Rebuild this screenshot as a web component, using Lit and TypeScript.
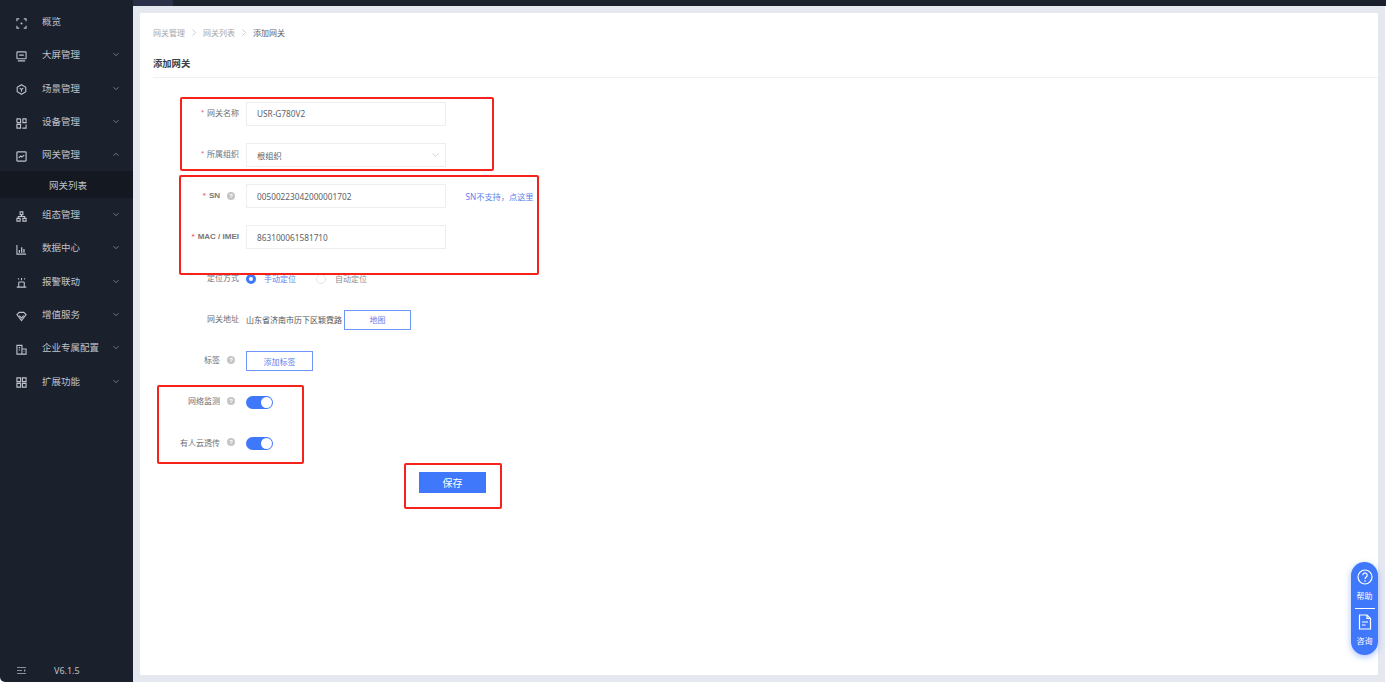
import { LitElement, html, css, svg } from "lit";
import { customElement } from "lit/decorators.js";

const ic = (body: unknown) => html`<svg class="ic" viewBox="0 0 12 12" fill="none" stroke="currentColor" stroke-width="1.2">${body}</svg>`;
const icons: Record<string, unknown> = {
  overview: svg`<path d="M1 3.500V1h2.500M8.500 1H11v2.500M11 8.500V11H8.500M3.500 11H1V8.500"/><circle cx="6" cy="6" r="1.100" fill="currentColor" stroke="none"/>`,
  screen: svg`<rect x="1" y="1" width="10" height="7.500" rx=".6"/><path d="M3.500 4.500h5M2 10.800h8" stroke-width="1.300"/>`,
  scene: svg`<path d="M6 .8l4.700 2.700v5L6 11.200 1.300 8.500v-5z"/><path d="M4 4.500L6 6l2-1.500M6 6v2.500"/>`,
  device: svg`<path d="M1 5V1h4M1 5h4V1M7.500 1H11v4H7.500zM1 7h4v4H1zM11 7v4H7"/>`,
  gateway: svg`<rect x="1" y="1" width="10" height="10" rx=".6" stroke-width="1.300"/><path d="M3 7.500l2-2 1.500 1L9 4.500"/>`,
  config: svg`<path d="M4.500 1h3v3h-3zM1 8h3.500v3H1zM7.500 8H11v3H7.500zM6 4v2M2.500 8V6h7v2"/>`,
  data: svg`<path d="M1 1v10h10"/><path d="M3.700 6.500v3M6.200 3.500v6M8.700 5.500v4" stroke-width="1.400"/>`,
  alarm: svg`<path d="M3 5.500v5.500M9 5.500v5.500M.8 11h10.400M3 5.500h6M6 1v2.500M2.200 1.500l1 1M9.800 1.500l-1 1"/>`,
  value: svg`<path d="M1 4l2.500-2.500h5L11 4l-5 6.500z"/><path d="M3.500 5L6 7.500 8.500 5"/>`,
  company: svg`<path d="M1 11V1.500h5.500V11zM6.500 5.500H11V11H1M3 4h1.500M3 6.500h1.500M8.500 8h.5"/>`,
  extend: svg`<path d="M1 1h4v4H1zM7 1h4v4H7zM1 7h4v4H1zM7 7h4v4H7z"/>`,
};

const menu = [
  ["overview", "概览", ""],
  ["screen", "大屏管理", "d"],
  ["scene", "场景管理", "d"],
  ["device", "设备管理", "d"],
  ["gateway", "网关管理", "u"],
  ["", "网关列表", ""],
  ["config", "组态管理", "d"],
  ["data", "数据中心", "d"],
  ["alarm", "报警联动", "d"],
  ["value", "增值服务", "d"],
  ["company", "企业专属配置", "d"],
  ["extend", "扩展功能", "d"],
];

@customElement("app-root")
export class AppRoot extends LitElement {
  static styles = css`
    :host {
      display: flex;
      width: 1386px;
      height: 682px;
      overflow: hidden;
      position: relative;
      background: #fff;
      font-family: "Noto Sans", "Noto Sans CJK SC", sans-serif;
      color: #555;
    }
    .side {
      width: 133px;
      flex: none;
      background: #1b202d;
      color: #bfc2ca;
      display: flex;
      flex-direction: column;
      font-size: 9.500px;
      padding-top: 5px;
      box-sizing: border-box;
      border-bottom-left-radius: 5px;
    }
    .item {
      height: 33.300px;
      display: flex;
      align-items: center;
      padding: 0 13.500px 0 16px;
    }
    .ic { width: 11px; height: 11px; flex: none; margin-top: 3px; }
    .item .name { margin-left: 15px; flex: 1; margin-top: -1px; }
    .chev { width: 8px; height: 5px; flex: none; }
    .sub {
      height: 26.500px;
      background: #141821;
      display: flex;
      align-items: center;
      padding-left: 49px;
    }
    .foot {
      margin-top: auto;
      height: 22px;
      display: flex;
      align-items: center;
      padding: 0 0 1px 17px;
      font-size: 9px;
    }
    .foot svg { width: 9px; height: 7px; margin-right: 28px; color: #8b8f99; }
    .main {
      flex: 1;
      display: flex;
      flex-direction: column;
      background: #e6e8f0;
      min-width: 0;
    }
    .top {
      height: 6px;
      flex: none;
      background: #1b202d;
      display: flex;
    }
    .tab { width: 40px; background: #2b3048; }
    .wrap {
      flex: 1;
      padding: 7px 7px 7px 7px;
      display: flex;
      min-height: 0;
      border-right: 1px solid #fff;
    }
    .card {
      flex: 1;
      background: #fff;
      padding: 0 0 0 13px;
      display: flex;
      flex-direction: column;
    }
    .crumb {
      height: 38px;
      display: flex;
      align-items: center;
      font-size: 8px;
      color: #a5a7ab;
    }
    .crumb svg { width: 4px; height: 7px; margin: 0 7px; color: #b5b7bb; }
    .crumb b { font-weight: 400; color: #606266; }
    .title {
      height: 27px;
      padding-bottom: 2px;
      display: flex;
      align-items: center;
      font-size: 9.300px;
      font-weight: 700;
      color: #3c3f45;
      border-bottom: 1px solid #eef0f3;
      margin-bottom: 23.500px;
      box-sizing: border-box;
    }
    .row {
      height: 41.250px;
      display: flex;
      align-items: flex-start;
      font-size: 8px;
    }
    .label {
      width: 86px;
      height: 24px;
      display: flex;
      align-items: center;
      justify-content: flex-end;
      color: #6e7075;
      flex: none;
      margin-top: -1.500px;
      white-space: nowrap;
    }
    .label i { font-style: normal; color: #ef6a6a; margin-right: 3px; font-family: "Liberation Sans", sans-serif; }
    .label.en { font-family: "Liberation Sans", sans-serif; font-weight: 700; color: #777; margin-top: -0.500px; }
    .q {
      width: 8px;
      height: 8px;
      border-radius: 50%;
      background: #c4c5c7;
      color: #fff;
      font: 700 6px/8px "Liberation Sans", sans-serif;
      text-align: center;
      margin-left: 7px;
      margin-right: 4px;
      flex: none;
    }
    .control { margin-left: 7px; display: flex; align-items: center; height: 24px; }
    .input {
      width: 200px;
      height: 24px;
      border: 1px solid #eceef2;
      box-sizing: border-box;
      display: flex;
      align-items: center;
      justify-content: space-between;
      padding: 0 6px 0 10px;
      font-size: 8.250px;
      color: #606266;
    }
    .input svg { width: 7px; height: 4px; color: #c4c6cc; }
    .link { color: #5b82ee; font-size: 8.200px; margin-left: 19.500px; white-space: nowrap; }
    .radio {
      width: 10px;
      height: 10px;
      border-radius: 50%;
      box-sizing: border-box;
      border: 3px solid #3f78fb;
      background: #fff;
      margin-right: 8px;
    }
    .radio.off { border: 1px solid #e4e6ea; margin-right: 9px; }
    .on { color: #5b82ee; margin-right: 20px; }
    .plain { white-space: nowrap; color: #555; }
    .plain.muted { color: #8a8c90; }
    .btn {
      height: 20px;
      border: 1px solid #6f97f8;
      box-sizing: border-box;
      display: flex;
      align-items: center;
      justify-content: center;
      color: #5b82ee;
    }
    .btn.map { width: 67px; margin-left: 2px; }
    .btn.tag { width: 67px; }
    .switch {
      width: 27px;
      height: 13px;
      border-radius: 7px;
      background: #3f78fb;
      display: flex;
      justify-content: flex-end;
      align-items: center;
      padding-right: 1px;
      box-sizing: border-box;
    }
    .switch span { width: 11px; height: 11px; border-radius: 50%; background: #fff; }
    .savebar { padding-left: 266px; margin-top: -1px; }
    .save {
      width: 67px;
      height: 21px;
      background: #3f78fb;
      color: #fff;
      font-size: 10px;
      display: flex;
      align-items: center;
      justify-content: center;
    }
    .mark {
      position: absolute;
      border: 2px solid #f5231c;
      border-radius: 2px;
      box-sizing: border-box;
    }
    .m1 { left: 180px; top: 97px; width: 314px; height: 74px; }
    .m2 { left: 179px; top: 175px; width: 360px; height: 100px; }
    .m3 { left: 157px; top: 385px; width: 147px; height: 79px; }
    .m4 { left: 404px; top: 463px; width: 98px; height: 46px; }
    .help {
      position: absolute;
      left: 1351px;
      top: 562px;
      width: 27px;
      height: 93px;
      border-radius: 14px;
      background: #3f78fb;
      box-shadow: 0 2px 6px rgba(63, 120, 251, 0.45);
      color: #fff;
      font-size: 8px;
      display: flex;
      flex-direction: column;
      align-items: center;
      padding-top: 7px;
      box-sizing: border-box;
    }
    .help svg { width: 16px; height: 16px; flex: none; }
    .help span { line-height: 12px; margin-top: 5px; }
    .help hr {
      width: 20px;
      height: 1px;
      background: #fff;
      border: 0;
      margin: 6px 0 5px;
      flex: none;
    }
  `;

  private chevron(dir: string) {
    return html`<svg class="chev" viewBox="0 0 8 5" fill="none" stroke="#8d919b" stroke-width=".8">
      ${dir === "d" ? svg`<path d="M1.500 1.200L4 3.700l2.500-2.500"/>` : svg`<path d="M1.500 3.700L4 1.200l2.500 2.500"/>`}
    </svg>`;
  }

  private q() {
    return html`<span class="q">?</span>`;
  }

  render() {
    return html`
      <aside class="side">
        ${menu.map(([icon, name, dir]) =>
          icon
            ? html`<div class="item">${ic(icons[icon])}<span class="name">${name}</span>${dir ? this.chevron(dir) : ""}</div>`
            : html`<div class="sub">${name}</div>`
        )}
        <div class="foot">
          <svg viewBox="0 0 9 7" fill="currentColor"><path d="M0 0h9v1H0zM0 3h5v1H0zM0 6h9v1H0zM7 2l2 1.500L7 5z"/></svg>
          <span>V6.1.5</span>
        </div>
      </aside>
      <div class="main">
        <div class="top"><div class="tab"></div></div>
        <div class="wrap">
          <div class="card">
            <div class="crumb">
              网关管理
              <svg viewBox="0 0 4 7" fill="none" stroke="currentColor" stroke-width=".7"><path d="M.5.5l3 3-3 3"/></svg>
              网关列表
              <svg viewBox="0 0 4 7" fill="none" stroke="currentColor" stroke-width=".7"><path d="M.5.5l3 3-3 3"/></svg>
              <b>添加网关</b>
            </div>
            <div class="title">添加网关</div>

            <div class="row">
              <div class="label"><i>*</i>网关名称</div>
              <div class="control"><div class="input">USR-G780V2</div></div>
            </div>
            <div class="row">
              <div class="label"><i>*</i>所属组织</div>
              <div class="control">
                <div class="input">根组织
                  <svg viewBox="0 0 7 4" fill="none" stroke="currentColor" stroke-width=".8"><path d="M.5.500l3 3 3-3"/></svg>
                </div>
              </div>
            </div>
            <div class="row">
              <div class="label en"><i>*</i>SN${this.q()}</div>
              <div class="control"><div class="input">00500223042000001702</div><span class="link">SN不支持，点这里</span></div>
            </div>
            <div class="row">
              <div class="label en"><i>*</i>MAC / IMEI</div>
              <div class="control"><div class="input">863100061581710</div></div>
            </div>
            <div class="row">
              <div class="label">定位方式</div>
              <div class="control">
                <span class="radio"></span><span class="on">手动定位</span>
                <span class="radio off"></span><span class="plain muted">自动定位</span>
              </div>
            </div>
            <div class="row">
              <div class="label">网关地址</div>
              <div class="control"><span class="plain">山东省济南市历下区颖霓路</span><div class="btn map">地图</div></div>
            </div>
            <div class="row">
              <div class="label">标签${this.q()}</div>
              <div class="control"><div class="btn tag">添加标签</div></div>
            </div>
            <div class="row">
              <div class="label">网络监测${this.q()}</div>
              <div class="control"><div class="switch"><span></span></div></div>
            </div>
            <div class="row">
              <div class="label">有人云透传${this.q()}</div>
              <div class="control"><div class="switch"><span></span></div></div>
            </div>
            <div class="savebar"><div class="save">保存</div></div>
          </div>
        </div>
      </div>

      <div class="mark m1"></div>
      <div class="mark m2"></div>
      <div class="mark m3"></div>
      <div class="mark m4"></div>

      <div class="help">
        <svg viewBox="0 0 16 16" fill="none" stroke="currentColor" stroke-width="1.200">
          <circle cx="8" cy="8" r="7"/>
          <path d="M5.800 6.200a2.200 2.200 0 1 1 3.400 1.800c-.8.500-1.200 1-1.200 1.900"/>
          <circle cx="8" cy="12" r=".8" fill="currentColor" stroke="none"/>
        </svg>
        <span>帮助</span>
        <hr />
        <svg viewBox="0 0 16 16" fill="none" stroke="currentColor" stroke-width="1.200">
          <path d="M2.500 1h7.500l3.500 3.500V15h-11z"/>
          <path d="M10 1v3.500h3.500M5 8h6M5 11h3.500"/>
        </svg>
        <span>咨询</span>
      </div>
    `;
  }
}
